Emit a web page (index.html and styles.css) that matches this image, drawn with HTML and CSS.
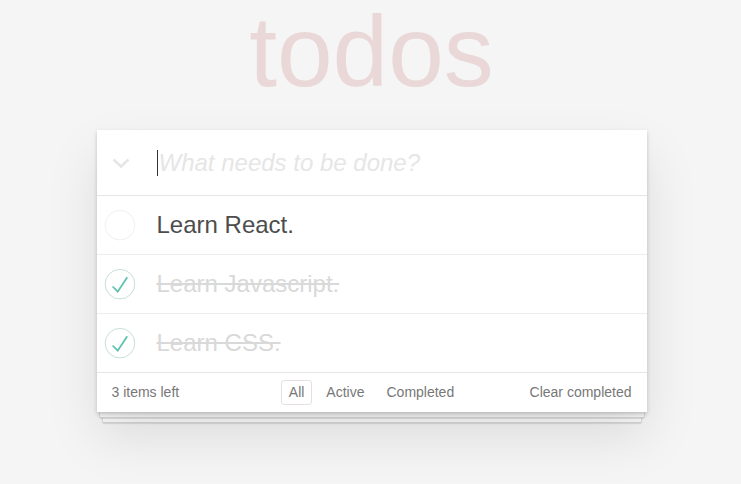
FILE: index.html
```html
<!DOCTYPE html>
<html lang="en">
<head>
<meta charset="utf-8">
<title>TodoMVC</title>
<link rel="stylesheet" href="styles.css">
</head>
<body>
<section class="todoapp">
  <h1 class="title">todos</h1>
  <div class="card">
    <header class="new-row">
      <span class="toggle-all">
        <svg width="18" height="11" viewBox="0 0 18 11"><path d="M1.5 1.5 L9 8.5 L16.5 1.5" fill="none" stroke="#e6e6e6" stroke-width="2.6"/></svg>
      </span>
      <span class="caret"></span>
      <input class="new-todo" type="text" placeholder="What needs to be done?">
    </header>
    <ul class="todo-list">
      <li class="todo">
        <svg class="check" width="40" height="40" viewBox="-10 -18 100 135"><circle cx="50" cy="50" r="50" fill="none" stroke="#ededed" stroke-width="3"/></svg>
        <span class="label">Learn React.</span>
      </li>
      <li class="todo done">
        <svg class="check" width="40" height="40" viewBox="-10 -18 100 135"><circle cx="50" cy="50" r="50" fill="none" stroke="#bddad5" stroke-width="3"/><path fill="#5dc2af" d="M72 25L42 71 27 56l-4 4 20 20 34-52z"/></svg>
        <span class="label">Learn Javascript.</span>
      </li>
      <li class="todo done">
        <svg class="check" width="40" height="40" viewBox="-10 -18 100 135"><circle cx="50" cy="50" r="50" fill="none" stroke="#bddad5" stroke-width="3"/><path fill="#5dc2af" d="M72 25L42 71 27 56l-4 4 20 20 34-52z"/></svg>
        <span class="label">Learn CSS.</span>
      </li>
    </ul>
    <footer class="footer">
      <span class="count">3 items left</span>
      <ul class="filters">
        <li><a class="filter selected">All</a></li>
        <li><a class="filter">Active</a></li>
        <li><a class="filter">Completed</a></li>
      </ul>
      <span class="clear">Clear completed</span>
    </footer>
  </div>
  <div class="sheet sheet-1"></div>
  <div class="sheet sheet-2"></div>
</section>
</body>
</html>
```

FILE: styles.css
```css
html, body {
  margin: 0;
  padding: 0;
}
body {
  background: #f5f5f5;
  font-family: "Liberation Sans", Arial, sans-serif;
  font-size: 14px;
  line-height: 1.4em;
  color: #4d4d4d;
  padding: 6px 0 60px 2px;
}
.todoapp {
  width: 550px;
  margin: 0 auto;
}
.title {
  margin: -12px 0 21px 0;
  font-size: 100px;
  line-height: normal;
  font-weight: normal;
  text-align: center;
  color: rgba(175, 47, 47, 0.15);
}
.card {
  position: relative;
  z-index: 2;
  background: #fff;
  box-shadow: 0 2px 4px 0 rgba(0, 0, 0, 0.2), 0 25px 50px 0 rgba(0, 0, 0, 0.1);
}
.new-row {
  position: relative;
  display: flex;
  align-items: center;
  height: 65px;
  border-bottom: 1px solid #e6e6e6;
}
.toggle-all {
  flex: 0 0 60px;
  display: flex;
  padding-top: 2px;
  padding-left: 15px;
  box-sizing: border-box;
}
.toggle-all svg {
  display: block;
}
.caret {
  position: absolute;
  left: 60px;
  top: 20px;
  width: 1px;
  height: 26px;
  background: #333;
}
.new-todo {
  flex: 1;
  border: none;
  outline: none;
  background: transparent;
  padding: 0 16px 0 2px;
  font-family: inherit;
  font-size: 24px;
  line-height: 33px;
  color: #4d4d4d;
}
.new-todo::placeholder {
  font-style: italic;
  color: #e6e6e6;
}
.todo-list {
  list-style: none;
  margin: 0;
  padding: 0;
}
.todo {
  display: flex;
  align-items: center;
  height: 58px;
  border-bottom: 1px solid #ededed;
  font-size: 24px;
}
.todo:last-child {
  border-bottom: none;
}
.check {
  flex: 0 0 40px;
  display: block;
  margin-right: 20px;
}
.label {
  line-height: 28px;
  color: #4d4d4d;
}
.done .label {
  color: #d9d9d9;
  text-decoration: line-through;
}
.footer {
  display: grid;
  grid-template-columns: 1fr auto 1fr;
  align-items: center;
  height: 40px;
  box-sizing: border-box;
  padding: 0 15px;
  border-top: 1px solid #e6e6e6;
  color: #777;
}
.count {
  justify-self: start;
}
.filters {
  display: flex;
  list-style: none;
  margin: 0;
  padding: 0;
}
.filter {
  display: block;
  margin: 3px;
  padding: 3px 7px;
  border: 1px solid transparent;
  border-radius: 3px;
  line-height: 17px;
  color: inherit;
}
.filter.selected {
  border-color: #e6e0e0;
}
.clear {
  justify-self: end;
}
.sheet {
  position: relative;
  background: #fafafa;
  border-bottom: 1px solid #d6d6d6;
  box-shadow: 0 1px 1px rgba(0, 0, 0, 0.08), 1px 0 1px rgba(0, 0, 0, 0.08), -1px 0 1px rgba(0, 0, 0, 0.08);
}
.sheet-1 {
  z-index: 1;
  height: 5px;
  margin: 0 3px;
}
.sheet-2 {
  z-index: 0;
  height: 4px;
  margin: 0 6px;
}
```
